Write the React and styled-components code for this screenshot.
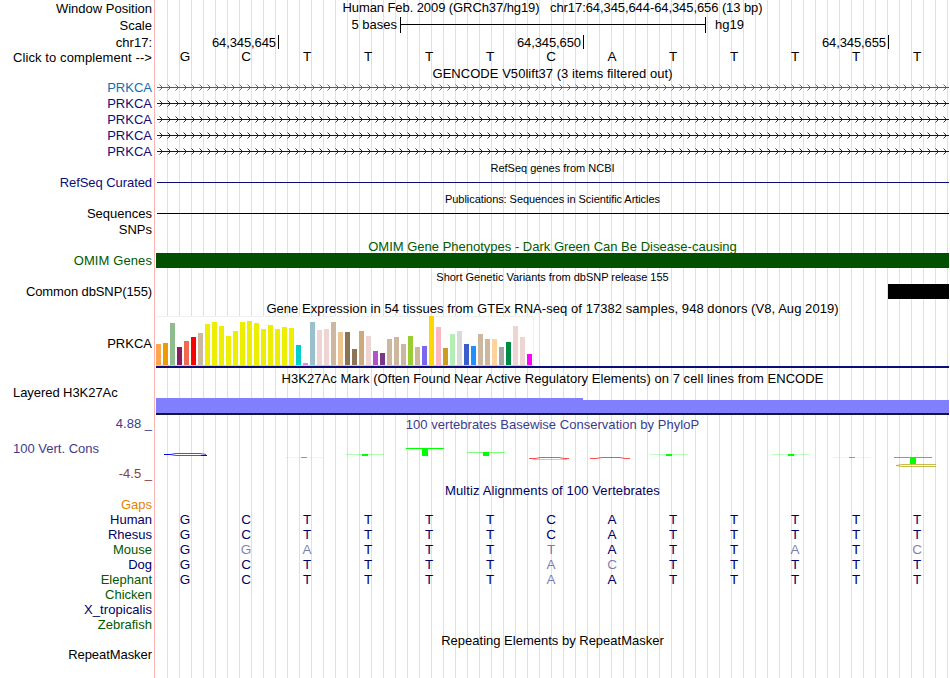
/**
 *
 * GenomeTracks
 *
 */

import React from 'react';
import styled, { createGlobalStyle } from 'styled-components';

const GlobalStyle = createGlobalStyle`
  body {
    margin: 0;
    background: #fff;
  }
`;

const NAVY = '#0c0c78';
const DARK_NAVY = '#000064';
const GREEN = '#005a00';
const SLATE = '#3c3c8c';

const Browser = styled.div`
  width: 949px;
  height: 678px;
  overflow: hidden;
  display: flex;
  flex-direction: column;
  color: #000;
  font: 13px/15px 'Liberation Sans', Arial, sans-serif;
  white-space: pre;
  background: linear-gradient(#ffb4b4, #ffb4b4) 154px 0 / 1px 100% no-repeat,
    repeating-linear-gradient(
        to right,
        #dcdcff 0,
        #dcdcff 1px,
        transparent 1px,
        transparent 12px
      )
      167px 0 / 782px 100% no-repeat;
`;

const Row = styled.div`
  display: flex;
  flex: none;
  height: ${p => p.$h}px;
`;

const Label = styled.div`
  box-sizing: border-box;
  flex: none;
  width: 156px;
  padding: ${p => p.$top || 0}px 4px 0 ${p => (p.$left ? 13 : 0)}px;
  text-align: ${p => (p.$left ? 'left' : 'right')};
  color: ${p => p.$color || '#000'};
  letter-spacing: ${p => p.$space || 0}px;
`;

const Lane = styled.div`
  flex: none;
  width: 793px;
`;

const Heading = styled(Lane)`
  padding-top: ${p => p.$top || 0}px;
  text-align: center;
  color: ${p => p.$color || '#000'};
  letter-spacing: ${p => p.$space || 0}px;
`;

const Title = styled(Heading)`
  box-sizing: border-box;
  height: ${p => p.$h}px;
  margin-left: 156px;
  font-size: ${p => (p.$small ? 11 : 13)}px;
`;

const ScaleLane = styled(Lane)`
  display: flex;
  gap: 3px;
`;

const ScaleText = styled.div`
  width: 241px;
  text-align: right;
`;

const ScaleBar = styled.div`
  box-sizing: border-box;
  width: 306px;
  height: 16px;
  border: solid #000;
  border-width: 0 1px;
  background: linear-gradient(#000, #000) 0 7px / 100% 1px no-repeat;
`;

const Assembly = styled.div`
  padding-left: 6px;
`;

const Ruler = styled(Lane)`
  display: flex;
`;

const Tick = styled.div`
  box-sizing: border-box;
  width: ${p => p.$w}px;
  height: 14px;
  margin-top: 1px;
  padding-right: 2px;
  border-right: 1px solid #000;
  text-align: right;
  letter-spacing: -0.1px;
`;

const Bases = styled(Lane)`
  display: grid;
  grid-template-columns: repeat(13, 61px);
  margin-left: -1.5px;
  text-align: center;
  font-size: 13.5px;
  color: ${p => p.$color || '#000'};
`;

const Base = styled.span`
  opacity: ${p => (p.$faded ? 0.5 : 1)};
`;

const Line = styled.div`
  height: 1px;
  margin: 7px 0 0 1px;
  background: ${p => p.$color};
`;

const Block = styled(Lane)`
  width: ${p => p.$w || 793}px;
  margin-left: ${p => 793 - (p.$w || 793)}px;
  background: ${p => p.$color};
`;

const Expression = styled(Lane)`
  border-bottom: 2px solid ${NAVY};
`;

const Bars = styled.div`
  box-sizing: border-box;
  display: flex;
  align-items: flex-end;
  gap: 2px;
  width: 378px;
  height: 50px;
  background: #fff;
  box-shadow: inset 0 1px #f0f0f0, inset -1px 0 #f0f0f0, inset 0 -1px #ccc;
  padding-bottom: 1px;
`;

const Bar = styled.div`
  width: 5px;
  background: ${p => p.$color};
`;

const Histone = styled(Lane)`
  box-sizing: border-box;
  display: flex;
  align-items: flex-end;
  padding-top: 13px;
  border-bottom: 2px solid #14143c;
`;

const Signal = styled.div`
  width: ${p => p.$w}px;
  height: ${p => p.$h}px;
  background: #8080ff;
`;

const Limits = styled.div`
  display: grid;
  grid-auto-rows: 25px;
`;

// title and marks share one cell
const Overlay = styled(Lane)`
  display: grid;

  > * {
    grid-area: 1 / 1;
  }
`;

const tissues = [
  ['#ffa54f', 21], ['#ee9a00', 22], ['#8fbc8f', 42], ['#8b1c62', 18],
  ['#ee6a50', 24], ['#ff0000', 28], ['#cdb79e', 32], ['#eeee00', 41],
  ['#eeee00', 43], ['#eeee00', 39], ['#eeee00', 29], ['#eeee00', 34],
  ['#eeee00', 43], ['#eeee00', 44], ['#eeee00', 42], ['#eeee00', 36],
  ['#eeee00', 40], ['#eeee00', 36], ['#eeee00', 38], ['#eeee00', 37],
  ['#00cdcd', 20], ['#ee82ee', 2], ['#9ac0cd', 43], ['#eed5d2', 35],
  ['#eed5d2', 36], ['#cdb79e', 43], ['#eec591', 33], ['#8b7355', 33],
  ['#8b7355', 16], ['#cdaa7d', 34], ['#eed5d2', 29], ['#b452cd', 14],
  ['#7a378b', 12], ['#cdb79e', 26], ['#cdb79e', 28], ['#cdb79e', 21],
  ['#9acd32', 29], ['#cdb79e', 18], ['#7a67ee', 19], ['#ffd700', 49],
  ['#ffb6c1', 38], ['#cd9b1d', 17], ['#b4eeb4', 31], ['#d9d9d9', 34],
  ['#3a5fcd', 21], ['#1e90ff', 19], ['#cdb79e', 31], ['#cdb79e', 26],
  ['#ffd39b', 26], ['#a6a6a6', 18], ['#008b45', 23], ['#eed5d2', 39],
  ['#eed5d2', 28], ['#ff00ff', 11],
];

const transcripts = ['#0c70b0', NAVY, NAVY, NAVY, NAVY];

// lower case marks a base that differs from the human sequence
const species = [
  { name: 'Gaps', color: '#e68200' },
  { name: 'Human', color: DARK_NAVY, seq: 'GCTTTTCATTTTT' },
  { name: 'Rhesus', color: DARK_NAVY, seq: 'GCTTTTCATTTTT' },
  { name: 'Mouse', color: GREEN, seq: 'GgaTTTtATTaTc' },
  { name: 'Dog', color: DARK_NAVY, seq: 'GCTTTTacTTTTT' },
  { name: 'Elephant', color: GREEN, seq: 'GCTTTTaATTTTT' },
  { name: 'Chicken', color: GREEN },
  { name: 'X_tropicalis', color: DARK_NAVY, space: 0.06 },
  { name: 'Zebrafish', color: GREEN },
];

// x, y of the T cap, stem height and cap opacity
const thymines = [
  [129, 42, 1, 0.12],
  [190, 39, 2, 0.3],
  [250, 33, 8, 1],
  [311, 37, 4, 0.5],
  [494, 39, 2, 0.25],
  [616, 39, 2, 0.25],
  [677, 42, 1, 0.12],
  [738, 42, 7, 1],
];

const Sequence = ({ seq, color }) => (
  <Bases $color={color}>
    {seq.split('').map((e, i) => (
      <Base key={i} $faded={e !== e.toUpperCase()}>
        {e.toUpperCase()}
      </Base>
    ))}
  </Bases>
);

const Strand = ({ color, id }) => (
  <svg width="793" height="16" fill="none" stroke={color}>
    <defs>
      <pattern id={id} width="8" height="16" patternUnits="userSpaceOnUse">
        <path d="M3.5 4.5L6.5 7.5L3.5 10.5" stroke={color} strokeWidth="0.9" />
      </pattern>
    </defs>
    <rect x="1" width="792" height="16" fill={`url(#${id})`} stroke="none" />
    <path d="M1 7.5H793" />
  </svg>
);

const Marks = () => (
  <svg width="793" height="68" fill="none">
    <path
      d="M8 39.5H14L20 38.5H44L50 39.5M14 39.5L20 40.5H51"
      fill="#fff"
      stroke="#00f"
      strokeWidth="0.7"
    />
    <path d="M8 39.5H14M45 40.5H51" stroke="#00f" />
    {thymines.map(([x, y, h, o]) => (
      <g key={x} fill="#0f0" shapeRendering="crispEdges">
        <rect x={x} y={y} width="38" height="1" opacity={o} />
        <rect x={x + 16} y={y} width="6" height={h} />
      </g>
    ))}
    <path d="M373 43.5H379L385 42.5H403L408 43.5H413" stroke="#f00" strokeWidth="0.7" />
    <path d="M377 44.5H411" stroke="#c86400" strokeWidth="0.4" />
    <path d="M434 43.5H440L446 42.5H464L469 43.5H474" stroke="#f00" strokeWidth="0.7" />
    <path
      d="M740 50.5L746 49.5H780M740 50.5L746 51.5H780"
      stroke="#b4a000"
      strokeWidth="0.7"
    />
  </svg>
);

const App = () => (
  <>
    <GlobalStyle />
    <Browser>
      <Row $h={17}>
        <Label $top={1}>Window Position</Label>
        <Heading $space={-0.085}>
          Human Feb. 2009 (GRCh37/hg19)   chr17:64,345,644-64,345,656 (13 bp)
        </Heading>
      </Row>
      <Row $h={17}>
        <Label $top={1}>Scale</Label>
        <ScaleLane>
          <ScaleText>5 bases</ScaleText>
          <ScaleBar />
          <Assembly>hg19</Assembly>
        </ScaleLane>
      </Row>
      <Row $h={15}>
        <Label $top={1}>chr17:</Label>
        <Ruler>
          <Tick $w={123}>64,345,645</Tick>
          <Tick $w={305}>64,345,650</Tick>
          <Tick $w={305}>64,345,655</Tick>
        </Ruler>
      </Row>
      <Row $h={17}>
        <Label $top={1} $space={0.09}>{'Click to complement -->'}</Label>
        <Sequence seq="GCTTTTCATTTTT" />
      </Row>

      <Title $h={14} $space={0.04}>GENCODE V50lift37 (3 items filtered out)</Title>
      {transcripts.map((color, i) => (
        <Row key={i} $h={16}>
          <Label $color={color}>PRKCA</Label>
          <Strand color={color} id={`strand${i}`} />
        </Row>
      ))}

      <Title $h={15} $top={1} $small>RefSeq genes from NCBI</Title>
      <Row $h={16}>
        <Label $color={NAVY} $space={-0.07}>RefSeq Curated</Label>
        <Lane><Line $color={NAVY} /></Lane>
      </Row>

      <Title $h={15} $top={1} $space={-0.06} $small>
        Publications: Sequences in Scientific Articles
      </Title>
      <Row $h={16}>
        <Label>Sequences</Label>
        <Lane><Line $color="#000" /></Lane>
      </Row>
      <Row $h={17}>
        <Label>SNPs</Label>
      </Row>

      <Title $h={14} $color={GREEN}>
        OMIM Gene Phenotypes - Dark Green Can Be Disease-causing
      </Title>
      <Row $h={15}>
        <Label $color={GREEN} $space={0.1}>OMIM Genes</Label>
        <Block $color="#005000" />
      </Row>

      <Title $h={16} $top={2} $space={-0.02} $small>
        Short Genetic Variants from dbSNP release 155
      </Title>
      <Row $h={15}>
        <Label $space={-0.11}>Common dbSNP(155)</Label>
        <Block $w={61} $color="#000" />
      </Row>

      <Title $h={17} $top={2} $space={0.055}>
        Gene Expression in 54 tissues from GTEx RNA-seq of 17382 samples, 948 donors (V8, Aug 2019)
      </Title>
      <Row $h={52}>
        <Label $top={20}>PRKCA</Label>
        <Expression>
          <Bars>
            {tissues.map(([color, h], i) => (
              <Bar key={i} $color={color} style={{ height: h }} />
            ))}
          </Bars>
        </Expression>
      </Row>

      <Title $h={17} $top={3} $space={0.05}>
        H3K27Ac Mark (Often Found Near Active Regulatory Elements) on 7 cell lines from ENCODE
      </Title>
      <Row $h={30}>
        <Label $left $space={-0.06}>Layered H3K27Ac</Label>
        <Histone>
          <Signal $w={427} $h={15} />
          <Signal $w={366} $h={13} />
        </Histone>
      </Row>

      <Row $h={68}>
        <Limits>
          <Label $top={1} $color={SLATE}>4.88 _</Label>
          <Label $top={1} $left $color={SLATE}>100 Vert. Cons</Label>
          <Label $top={1} $color="#8c3c3c">-4.5 _</Label>
        </Limits>
        <Overlay>
          <Heading $top={2} $color={SLATE} $space={0.03}>
            100 vertebrates Basewise Conservation by PhyloP
          </Heading>
          <Marks />
        </Overlay>
      </Row>

      <Title $h={14} $color={DARK_NAVY} $space={0.11}>
        Multiz Alignments of 100 Vertebrates
      </Title>
      {species.map(({ name, color, seq, space }) => (
        <Row key={name} $h={15}>
          <Label $color={color} $space={space}>{name}</Label>
          {seq && <Sequence seq={seq} color={DARK_NAVY} />}
        </Row>
      ))}

      <Title $h={15} $top={1}>Repeating Elements by RepeatMasker</Title>
      <Row $h={31}>
        <Label $space={-0.06}>RepeatMasker</Label>
      </Row>
    </Browser>
  </>
);

export default App;
